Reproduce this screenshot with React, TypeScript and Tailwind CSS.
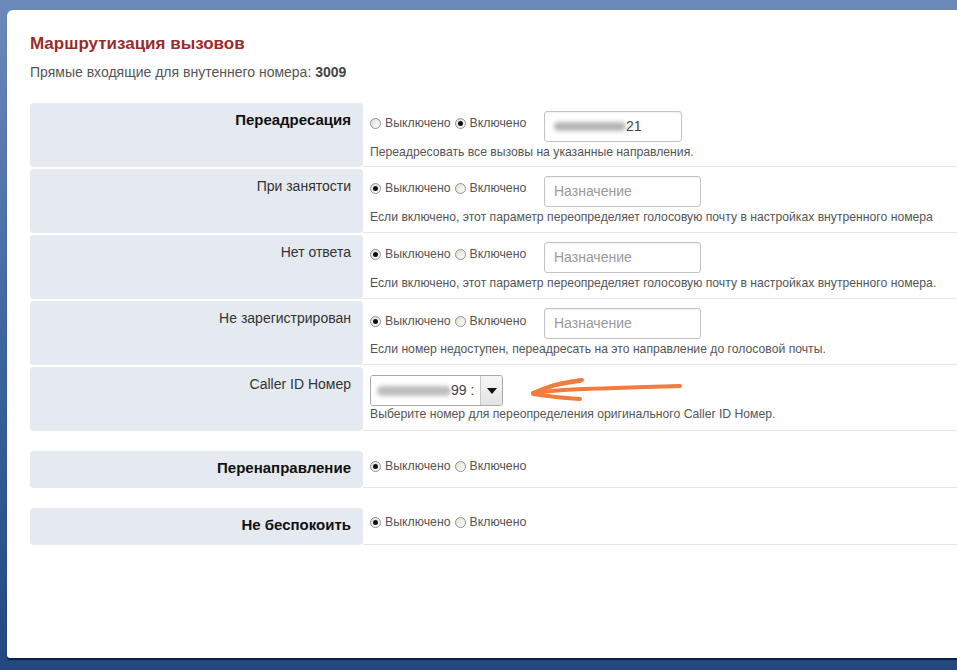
import React from "react";

const Radio = ({ checked }: { checked: boolean }) => (
  <span className="inline-flex items-center justify-center w-[11px] h-[11px] rounded-full border border-[#8f8f8f] bg-gradient-to-br from-[#dcdcdc] to-white mr-[4px] shrink-0">
    {checked && <span className="w-[5px] h-[5px] rounded-full bg-[#111]" />}
  </span>
);

const Radios = ({ on }: { on: boolean }) => (
  <div className="flex items-center text-[12.3px] text-[#555] leading-[16px]">
    <Radio checked={!on} />
    <span className="mr-[4px]">Выключено</span>
    <Radio checked={on} />
    <span>Включено</span>
  </div>
);

const Input = ({ children, w }: { children: React.ReactNode; w: string }) => (
  <div
    className={`${w} h-[31px] border border-[#c4c4c4] rounded-[3px] bg-white flex items-center px-[9px] text-[14px] text-[#999] shadow-[inset_0_1px_2px_rgba(0,0,0,0.06)]`}
  >
    {children}
  </div>
);

const Row = ({
  label,
  bold,
  tall = true,
  children,
}: {
  label: string;
  bold?: boolean;
  tall?: boolean;
  children: React.ReactNode;
}) => (
  <div className="flex">
    <div
      className={`w-[333px] shrink-0 bg-[#e5e9f0] rounded-[4px] text-right pr-[12px] ${
        tall ? "h-[64px] pt-[7px]" : "h-[37px] pt-[7px]"
      } leading-[20px] ${bold ? "text-[15px] font-bold text-[#111]" : "text-[14px] text-[#333]"}`}
    >
      {label}
    </div>
    <div className="relative flex-1 border-b border-[#e6e6e6] pl-[7px]">{children}</div>
  </div>
);

const Desc = ({ children }: { children: React.ReactNode }) => (
  <div className="mt-[2px] text-[12.2px] text-[#555] leading-[16px] whitespace-nowrap">{children}</div>
);

export default function App() {
  return (
    <div
      className="w-[957px] h-[670px] overflow-hidden bg-gradient-to-b from-[#6c8aba] via-[#3f65a0] to-[#22487f] pl-[7px] pt-[10px]"
      style={{ fontFamily: '"Liberation Sans", Arial, sans-serif' }}
    >
      <div className="w-[960px] h-[648px] bg-white rounded-tl-[6px] rounded-bl-[3px] shadow-[0_2px_1px_rgba(0,0,30,0.6)] pl-[23px] pt-[24px]">
        <div className="text-[17px] font-bold text-[#9a2b2b] leading-[20px]">Маршрутизация вызовов</div>
        <div className="mt-[9px] text-[14px] text-[#555] leading-[18px]">
          Прямые входящие для внутеннего номера: <b className="text-[#444]">3009</b>
        </div>

        <div className="mt-[22px] w-[927px] flex flex-col gap-[2px]">
          <Row label="Переадресация" bold>
            <div className="flex items-start pt-[8px]">
              <div className="w-[174px] pt-[4px]">
                <Radios on={true} />
              </div>
              <Input w="w-[138px]">
                <span className="w-[72px] h-[9px] bg-[#b5b5b5] blur-[2px] rounded-full" />
                <span className="text-[#444]">21</span>
              </Input>
            </div>
            <Desc>Переадресовать все вызовы на указанные направления.</Desc>
          </Row>
          <Row label="При занятости">
            <div className="flex items-start pt-[7px]">
              <div className="w-[174px] pt-[4px]">
                <Radios on={false} />
              </div>
              <Input w="w-[157px]">Назначение</Input>
            </div>
            <Desc>Если включено, этот параметр переопределяет голосовую почту в настройках внутренного номера</Desc>
          </Row>
          <Row label="Нет ответа">
            <div className="flex items-start pt-[7px]">
              <div className="w-[174px] pt-[4px]">
                <Radios on={false} />
              </div>
              <Input w="w-[157px]">Назначение</Input>
            </div>
            <Desc>Если включено, этот параметр переопределяет голосовую почту в настройках внутренного номера.</Desc>
          </Row>
          <Row label="Не зарегистрирован">
            <div className="flex items-start pt-[7px]">
              <div className="w-[174px] pt-[5px]">
                <Radios on={false} />
              </div>
              <Input w="w-[157px]">Назначение</Input>
            </div>
            <Desc>Если номер недоступен, переадресать на это направление до голосовой почты.</Desc>
          </Row>
          <Row label="Caller ID Номер">
            <div className="pt-[8px]">
              <div className="w-[133px] h-[31px] border border-[#a9a9a9] rounded-[3px] flex overflow-hidden">
                <div className="flex-1 flex items-center pl-[6px] text-[14px] text-[#444] bg-white">
                  <span className="w-[74px] h-[10px] bg-[#bdbdbd] blur-[2px] rounded-full" />
                  <span>99 :</span>
                </div>
                <div className="w-[22px] border-l border-[#c8c8c8] bg-gradient-to-b from-[#f6f6f6] to-[#e4e4e4] flex items-center justify-center">
                  <span className="w-0 h-0 border-l-[5px] border-r-[5px] border-t-[6px] border-l-transparent border-r-transparent border-t-[#111]" />
                </div>
              </div>
            </div>
            <div className="mt-[0px] text-[12.2px] text-[#555] leading-[16px]">
              Выберите номер для переопределения оригинального Caller ID Номер.
            </div>
            <svg
              className="absolute left-[160px] top-[8px]"
              width="170"
              height="36"
              viewBox="0 0 170 36"
              fill="none"
              stroke="#f27b3d"
              strokeWidth="4"
              strokeLinecap="round"
              strokeLinejoin="round"
            >
              <path d="M157 11 C120 12 80 13 40 15 C28 16 18 17 10 18" />
              <path d="M10 18 C24 12 36 8 46 7 C52 6 56 5 59 5" />
              <path d="M26 12 C38 8 50 7 57 6" />
              <path d="M10 19 C24 21 40 23 57 24" />
            </svg>
          </Row>

          <div className="h-[16px]" />
          <Row label="Перенаправление" bold tall={false}>
            <div className="pt-[7px]">
              <Radios on={false} />
            </div>
          </Row>
          <div className="h-[16px]" />
          <Row label="Не беспокоить" bold tall={false}>
            <div className="pt-[6px]">
              <Radios on={false} />
            </div>
          </Row>
        </div>
      </div>
    </div>
  );
}
